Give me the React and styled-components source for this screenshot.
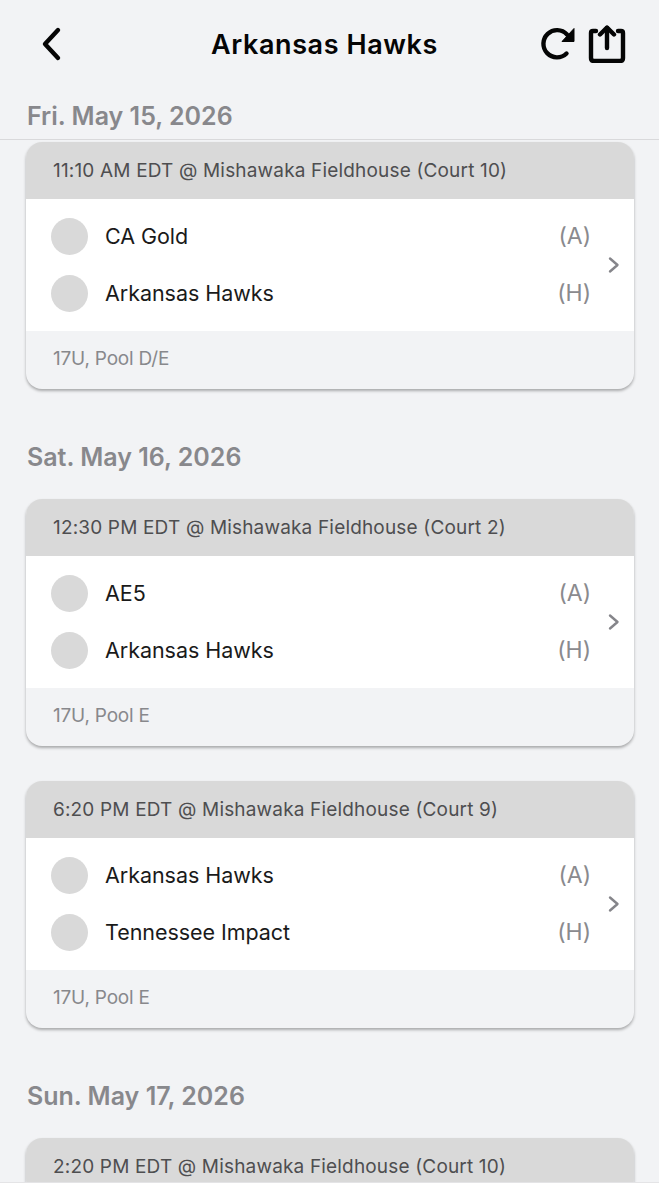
import React from "react";
import styled, { createGlobalStyle } from "styled-components";

const GlobalStyle = createGlobalStyle`
  html, body {
    margin: 0;
    background: #fff;
  }
  * {
    box-sizing: border-box;
  }
`;

const FONT = `"Inter", "Liberation Sans", sans-serif`;

const Page = styled.div`
  height: 1183px;
  overflow: hidden;
  background: #f2f3f5;
  font-family: ${FONT};
  border-bottom: 1px solid #e4e4e6;
`;

const TopBar = styled.div`
  display: flex;
  align-items: center;
  justify-content: space-between;
  height: 88px;
  padding: 0 33px 0 38px;
`;

const Title = styled.h1`
  margin: 0 0 0 43px;
  font-size: 27px;
  font-weight: 600;
  letter-spacing: 0.6px;
  color: #050505;
`;

const Actions = styled.div`
  display: flex;
  align-items: center;
  gap: 12px;
`;

const StickyDate = styled.div`
  height: 52px;
  padding: 13px 0 0 27px;
  border-bottom: 1px solid #d9d9db;
`;

const DateLabel = styled.div`
  flex: none;
  height: 30px;
  font-size: 25px;
  line-height: 30px;
  font-weight: 600;
  color: #88888c;
`;

const DayLabel = styled(DateLabel)`
  margin: 0 0 27px 1px;
`;

const List = styled.div`
  display: flex;
  flex-direction: column;
  padding: 2px 25px 0 26px;
`;

const Card = styled.section`
  flex: none;
  border-radius: 16px;
  overflow: hidden;
  background: #f2f3f5;
  box-shadow: 0 2px 3px rgba(0, 0, 0, 0.3);
  margin-bottom: ${({ $last }) => ($last ? "53px" : "35px")};
`;

const CardHead = styled.div`
  display: flex;
  align-items: center;
  height: 57px;
  padding-left: 27px;
  background: #d9d9d9;
  font-size: 19px;
  letter-spacing: 0.17px;
  color: #4e4e50;
`;

const CardBody = styled.div`
  position: relative;
  display: flex;
  flex-direction: column;
  height: 132px;
  padding: 9px 43px 0 25px;
  background: #fff;
`;

const TeamRow = styled.div`
  display: flex;
  align-items: center;
  height: 57px;
  padding-bottom: 1px;
  font-size: 21.5px;
  letter-spacing: -0.05px;
  color: #1a1a1a;
`;

const Avatar = styled.span`
  width: 37px;
  height: 37px;
  margin-right: 17px;
  border-radius: 50%;
  background: #d9d9d9;
`;

const Side = styled.span`
  margin-left: auto;
  font-size: 23px;
  color: #8a8a8e;
`;

const Chevron = styled.svg`
  position: absolute;
  right: 13px;
  top: 57px;
`;

const CardFoot = styled.div`
  display: flex;
  align-items: center;
  height: 58px;
  padding: 0 0 3px 27px;
  font-size: 19px;
  letter-spacing: -0.2px;
  color: #88888c;
`;

const DAYS = [
  {
    date: "Sat. May 16, 2026",
    games: [
      { time: "12:30 PM EDT @ Mishawaka Fieldhouse (Court 2)", away: "AE5", home: "Arkansas Hawks", pool: "17U, Pool E" },
      { time: "6:20 PM EDT @ Mishawaka Fieldhouse (Court 9)", away: "Arkansas Hawks", home: "Tennessee Impact", pool: "17U, Pool E" },
    ],
  },
  {
    date: "Sun. May 17, 2026",
    // only the top of this card is on screen
    games: [{ time: "2:20 PM EDT @ Mishawaka Fieldhouse (Court 10)" }],
  },
];

function BackIcon() {
  return (
    <svg width="28" height="36" viewBox="0 0 28 36" fill="none" stroke="#050505" strokeWidth="4.4" strokeLinecap="round" strokeLinejoin="round">
      <path d="M20 4 L7 18 L20 32" />
    </svg>
  );
}

function ReloadIcon() {
  return (
    <svg width="36" height="36" viewBox="0 0 36 36" fill="none">
      <path d="M26.5 27.5 A13.6 13.6 0 1 1 27 8.5" stroke="#050505" strokeWidth="4.4" strokeLinecap="round" />
      <path d="M34 2.5 V15.5 H22 Z" fill="#050505" stroke="#050505" strokeWidth="1" strokeLinejoin="round" />
    </svg>
  );
}

function ShareIcon() {
  return (
    <svg width="38" height="38" viewBox="0 0 38 38" fill="none" stroke="#050505" strokeWidth="4.4" strokeLinecap="round" strokeLinejoin="round">
      <path d="M8 6 H5 Q3 6 3 8 V33 Q3 36 6 36 H32 Q35 36 35 33 V8 Q35 6 33 6 H30" />
      <path d="M19 23 V3" />
      <path d="M12 9.5 L19 2.5 L26 9.5" />
    </svg>
  );
}

function Game({ game, last }) {
  return (
    <Card $last={last}>
      <CardHead>{game.time}</CardHead>
      {game.away && (
        <>
          <CardBody>
            <TeamRow>
              <Avatar />
              {game.away}
              <Side>(A)</Side>
            </TeamRow>
            <TeamRow>
              <Avatar />
              {game.home}
              <Side>(H)</Side>
            </TeamRow>
            <Chevron width="14" height="18" viewBox="0 0 14 18" fill="none" stroke="#85858a" strokeWidth="2.4" strokeLinecap="round" strokeLinejoin="round">
              <path d="M3 2.5 L10.5 9 L3 15.5" />
            </Chevron>
          </CardBody>
          <CardFoot>{game.pool}</CardFoot>
        </>
      )}
    </Card>
  );
}

export default function App() {
  return (
    <Page>
      <GlobalStyle />
      <TopBar>
        <BackIcon />
        <Title>Arkansas Hawks</Title>
        <Actions>
          <ReloadIcon />
          <ShareIcon />
        </Actions>
      </TopBar>
      <StickyDate>
        <DateLabel>Fri. May 15, 2026</DateLabel>
      </StickyDate>
      <List>
        <Game
          last
          game={{ time: "11:10 AM EDT @ Mishawaka Fieldhouse (Court 10)", away: "CA Gold", home: "Arkansas Hawks", pool: "17U, Pool D/E" }}
        />
        {DAYS.map((day) => (
          <React.Fragment key={day.date}>
            <DayLabel>{day.date}</DayLabel>
            {day.games.map((game, i) => (
              <Game key={game.time} game={game} last={i === day.games.length - 1} />
            ))}
          </React.Fragment>
        ))}
      </List>
    </Page>
  );
}
